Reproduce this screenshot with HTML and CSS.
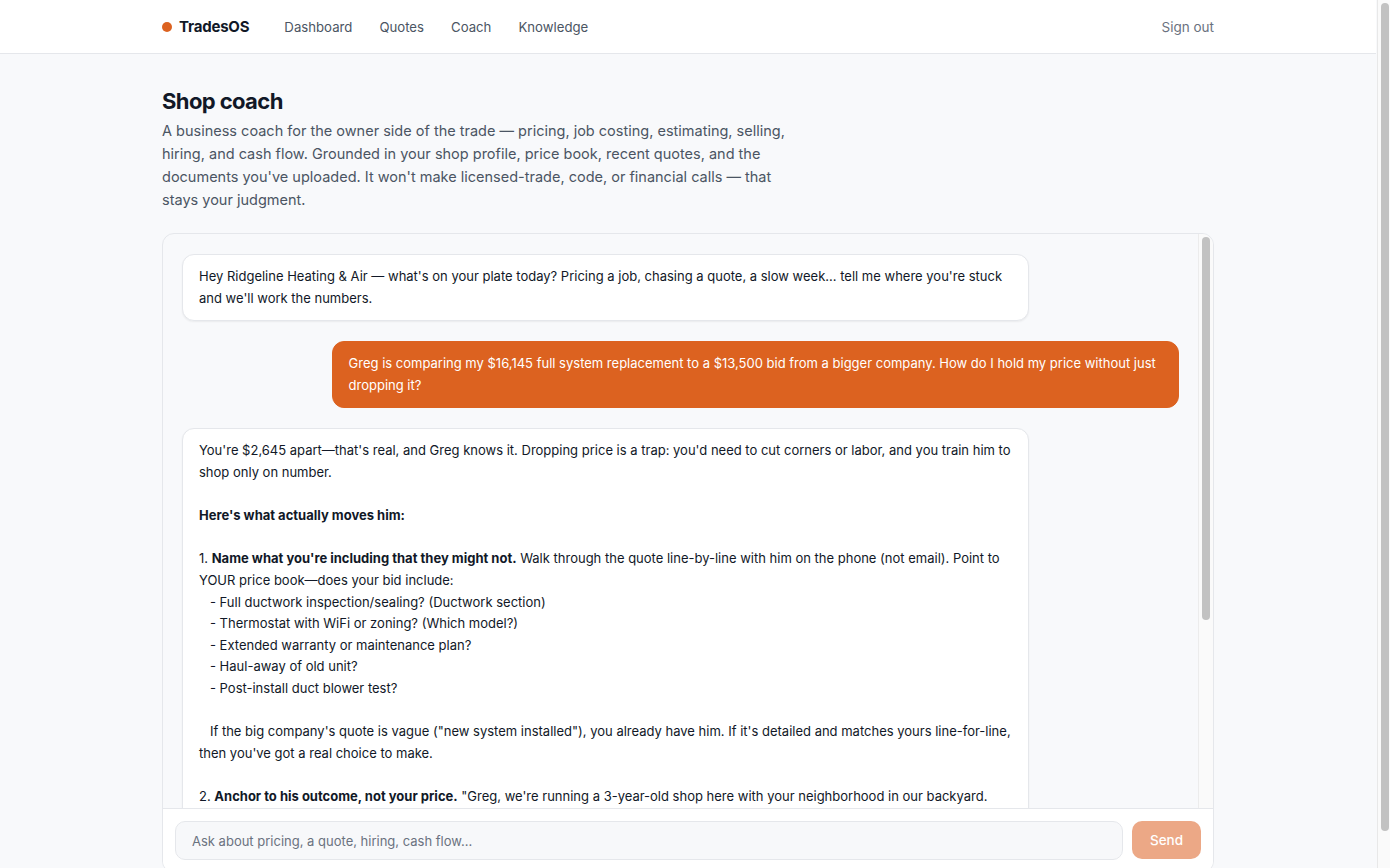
FILE: index.html
```html
<!DOCTYPE html>
<html lang="en">
<head>
<meta charset="utf-8">
<title>TradesOS — Shop coach</title>
<link rel="stylesheet" href="styles.css">
</head>
<body>
<header class="topbar">
  <div class="topbar-inner">
    <div class="brand"><span class="brand-dot"></span><span class="brand-name">TradesOS</span></div>
    <nav class="nav">
      <a href="#">Dashboard</a>
      <a href="#">Quotes</a>
      <a href="#">Coach</a>
      <a href="#">Knowledge</a>
    </nav>
    <a class="signout" href="#">Sign out</a>
  </div>
</header>
<main class="page">
  <h1 class="title">Shop coach</h1>
  <p class="lead">A business coach for the owner side of the trade — pricing, job costing, estimating, selling, hiring, and cash flow. Grounded in your shop profile, price book, recent quotes, and the documents you've uploaded. It won't make licensed-trade, code, or financial calls — that stays your judgment.</p>

  <section class="chat">
    <div class="messages">
      <div class="msg msg-bot">Hey Ridgeline Heating &amp; Air — what's on your plate today? Pricing a job, chasing a quote, a slow week... tell me where you're stuck and we'll work the numbers.</div>
      <div class="msg msg-user">Greg is comparing my $16,145 full system replacement to a $13,500 bid from a bigger company. How do I hold my price without just dropping it?</div>
      <div class="msg msg-bot">You're $2,645 apart—that's real, and Greg knows it. Dropping price is a trap: you'd need to cut corners or labor, and you train him to shop only on number.

<b>Here's what actually moves him:</b>

1. <b>Name what you're including that they might not.</b> Walk through the quote line-by-line with him on the phone (not email). Point to YOUR price book—does your bid include:
   - Full ductwork inspection/sealing? (Ductwork section)
   - Thermostat with WiFi or zoning? (Which model?)
   - Extended warranty or maintenance plan?
   - Haul-away of old unit?
   - Post-install duct blower test?

   If the big company's quote is vague ("new system installed"), you already have him. If it's detailed and matches yours line-for-line, then you've got a real choice to make.

2. <b>Anchor to his outcome, not your price.</b> "Greg, we're running a 3-year-old shop here with your neighborhood in our backyard. When something goes wrong at 9pm in January, you're calling my cell, not a 1-800 number."

3. <b>Offer a trade, not a discount.</b> If you move, move on scope—not rate. Drop the WiFi thermostat upgrade or push the maintenance plan to year two, and show him exactly what changed.

4. <b>Know your floor.</b> Check your job costing: at $16,145 you're around 38% gross margin. Don't go below your target—walking away from a bad job is cheaper than doing it.</div>
    </div>
    <div class="chat-scrollbar" aria-hidden="true"><span class="chat-thumb"></span></div>
    <form class="composer" onsubmit="return false">
      <input class="composer-input" type="text" placeholder="Ask about pricing, a quote, hiring, cash flow...">
      <button class="composer-send" type="button" disabled>Send</button>
    </form>
  </section>
</main>
<div class="window-scrollbar" aria-hidden="true"><span class="window-thumb"></span></div>
</body>
</html>
```

FILE: styles.css
```css
* { box-sizing: border-box; }

html, body {
  margin: 0;
  padding: 0;
}

body {
  background: #f8f9fb;
  font-family: Inter, "Noto Sans", "Liberation Sans", sans-serif;
  color: #111827;
  padding-right: 14px;
  -webkit-font-smoothing: antialiased;
}

a { text-decoration: none; }

/* decorative scrollbars (drawn over the page edge) */
.window-scrollbar {
  position: fixed;
  top: 0;
  right: 0;
  width: 13px;
  height: 100vh;
  background: #fafafa;
  border-left: 1px solid #e8e8e8;
}

.window-thumb {
  position: absolute;
  top: 3px;
  left: 3px;
  width: 8px;
  height: 828px;
  border-radius: 4px;
  background: #c2c2c2;
}

.topbar {
  background: #ffffff;
  border-bottom: 1px solid #e5e7eb;
  height: 54px;
}

.topbar-inner {
  max-width: 1100px;
  margin: 0 auto;
  padding: 0 24px;
  height: 100%;
  display: flex;
  align-items: center;
}

.brand {
  display: flex;
  align-items: center;
  gap: 7px;
}

.brand-dot {
  width: 10px;
  height: 10px;
  border-radius: 50%;
  background: #dc6220;
}

.brand-name {
  font-weight: 700;
  font-size: 15px;
  color: #111827;
  letter-spacing: -0.2px;
}

.nav {
  display: flex;
  gap: 27px;
  margin-left: 35px;
}

.nav a {
  font-size: 13.2px;
  color: #4b5563;
}

.signout {
  margin-left: auto;
  font-size: 13.5px;
  color: #6b7280;
}

.page {
  max-width: 1100px;
  margin: 0 auto;
  padding: 32px 24px 32px;
}

.title {
  margin: 0;
  font-size: 22px;
  font-weight: 700;
  letter-spacing: -0.6px;
  line-height: 30px;
  color: #111827;
}

.lead {
  margin: 3px 0 0;
  max-width: 630px;
  font-size: 14.5px;
  line-height: 23px;
  color: #4b5563;
}

.chat {
  position: relative;
  margin-top: 22px;
  background: #f8f9fb;
  border: 1px solid #e5e7eb;
  border-radius: 12px;
  overflow: hidden;
  display: flex;
  flex-direction: column;
}

.messages {
  height: 574px;
  overflow-y: hidden;
  padding: 20px 34px 20px 19px;
  display: flex;
  flex-direction: column;
  gap: 20px;
}

.chat-scrollbar {
  position: absolute;
  top: 0;
  right: 0;
  width: 15px;
  height: 574px;
  background: #fafafa;
  border-left: 1px solid #ececec;
}

.chat-thumb {
  position: absolute;
  top: 3px;
  left: 3px;
  width: 8px;
  height: 383px;
  border-radius: 4px;
  background: #c2c2c2;
}

.msg {
  max-width: 85%;
  padding: 11px 16px;
  border-radius: 12px;
  font-size: 13px;
  line-height: 21.6px;
  white-space: pre-wrap;
  flex-shrink: 0;
}

.msg b { font-weight: 700; }

.msg-bot {
  align-self: flex-start;
  width: 85%;
  background: #ffffff;
  border: 1px solid #e5e7eb;
  box-shadow: 0 1px 2px rgba(0, 0, 0, 0.06);
  color: #111827;
}

.msg-user {
  align-self: flex-end;
  width: 85%;
  background: #dc6220;
  color: #ffffff;
  border: 1px solid #dc6220;
}

.composer {
  display: flex;
  gap: 9px;
  padding: 12px;
  background: #ffffff;
  border-top: 1px solid #e5e7eb;
  margin: 0;
}

.composer-input {
  flex: 1;
  height: 39px;
  border: 1px solid #e5e7eb;
  background: #f7f8fa;
  border-radius: 10px;
  padding: 0 16px;
  font-family: inherit;
  font-size: 13px;
  color: #111827;
  outline: none;
}

.composer-input::placeholder { color: #6b7280; }

.composer-send {
  width: 69px;
  height: 38px;
  border: none;
  border-radius: 10px;
  background: #eca886;
  color: #ffffff;
  font-family: inherit;
  font-size: 13.5px;
  font-weight: 500;
}
```
